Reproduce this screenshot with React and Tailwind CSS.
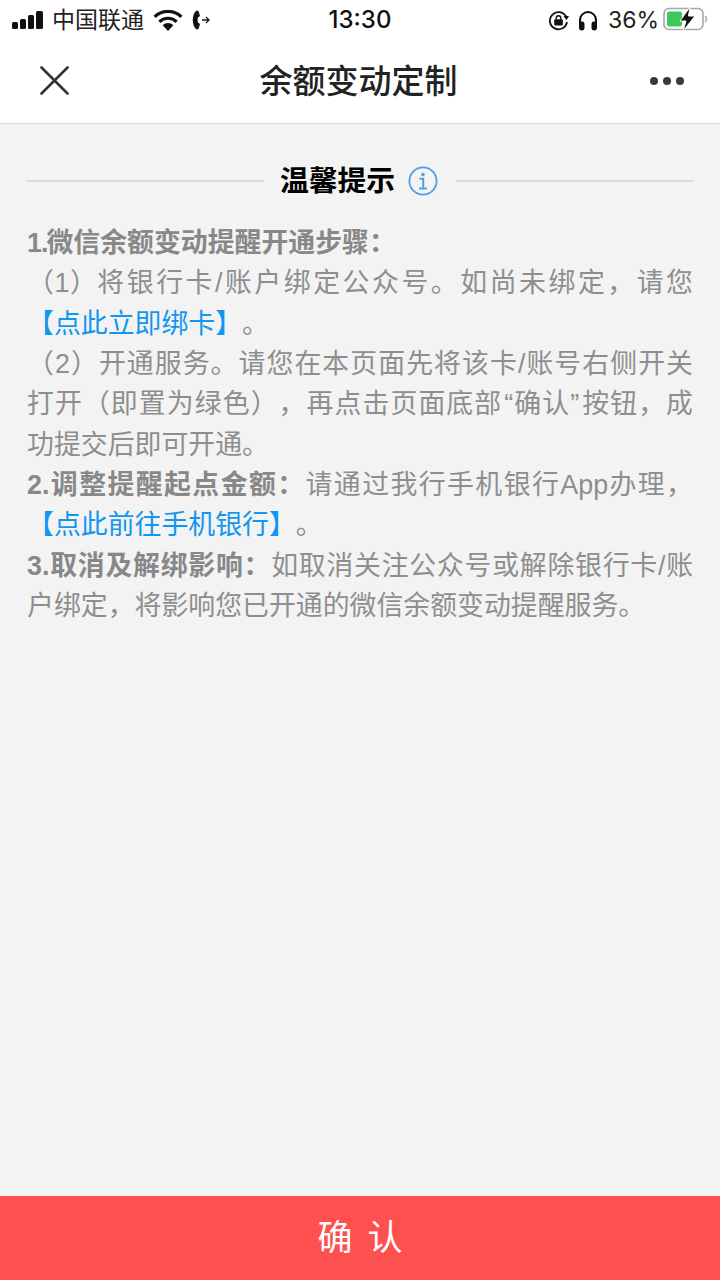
const font = { fontFamily: '"Liberation Sans", "Noto Sans CJK SC", sans-serif' }

function StatusBar() {
  return (
    <div className="flex items-center h-10 bg-white text-[#111] relative">
      {/* signal */}
      <div className="flex items-end gap-[2px] ml-[12px] h-[19px] pb-[1px]">
        <span className="w-[6px] h-[7px] rounded-[1.5px] bg-[#111]" />
        <span className="w-[6px] h-[10px] rounded-[1.5px] bg-[#111]" />
        <span className="w-[6px] h-[14px] rounded-[1.5px] bg-[#111]" />
        <span className="w-[7px] h-[18px] rounded-[1.5px] bg-[#111]" />
      </div>
      <span className="ml-[9px] text-[23px] leading-none text-[#222]">中国联通</span>
      <svg className="ml-[9px]" width="30" height="21" viewBox="0 0 30 21">
        <path d="M15 21 L9.6 15.2 A7.6 7.6 0 0 1 20.4 15.2 Z" fill="#111" />
        <path d="M6.4 11.8 A12.2 12.2 0 0 1 23.6 11.8" fill="none" stroke="#111" strokeWidth="3.2" />
        <path d="M1.6 6.9 A19 19 0 0 1 28.4 6.9" fill="none" stroke="#111" strokeWidth="3.2" />
      </svg>
      <svg className="ml-[9px]" width="18" height="20" viewBox="0 0 18 20">
        <path d="M4.5 0.5 L6.5 1 L8 6 L6 7.5 C5.5 9 5.5 11 6 12.5 L8 14 L6.5 19 L4.5 19.5 C-0.5 16 -0.5 4 4.5 0.5 Z" fill="#111" />
        <path d="M10 10 H17 M14 7 L17 10 L14 13" fill="none" stroke="#222" strokeWidth="1.4" />
      </svg>
      <span
        className="absolute left-0 right-0 text-center text-[24px] leading-none font-medium pointer-events-none"
        style={{ fontFamily: '"Inter", sans-serif' }}
      >
        13:30
      </span>
      <div className="ml-auto flex items-center mr-[12px]">
        <svg width="21" height="21" viewBox="0 0 21 21">
          <path d="M18 6.5 A8.6 8.6 0 1 0 19 12" fill="none" stroke="#111" strokeWidth="1.8" />
          <path d="M15.5 6 H21 L18.4 10.2 Z" fill="#111" />
          <rect x="6.2" y="9.2" width="8.6" height="6.3" rx="1" fill="#111" />
          <path d="M8.2 9.5 V8 A2.3 2.3 0 0 1 12.8 8 V9.5" fill="none" stroke="#111" strokeWidth="1.4" />
        </svg>
        <svg className="ml-[9px]" width="20" height="21" viewBox="0 0 20 21">
          <path d="M2 14 V10 A8 8 0 0 1 18 10 V14" fill="none" stroke="#111" strokeWidth="2" />
          <rect x="1" y="11.5" width="5.5" height="9" rx="2.4" fill="#111" />
          <rect x="13.5" y="11.5" width="5.5" height="9" rx="2.4" fill="#111" />
        </svg>
        <span className="ml-[10px] text-[23px] leading-none text-[#222]" style={{ fontFamily: '"Inter", sans-serif' }}>
          36%
        </span>
        <svg className="ml-[4px] mb-[2px]" width="45" height="24" viewBox="0 0 45 24">
          <rect x="1" y="1.5" width="39" height="21" rx="5" fill="none" stroke="#a8a8a8" strokeWidth="1.6" />
          <rect x="4" y="4.5" width="15" height="15" rx="2" fill="#3cc95c" />
          <path d="M42 9 C44 10 44 14 42 15" fill="none" stroke="#aaa" strokeWidth="1.6" />
          <path d="M27 0 L17 14 H23 L20 24 L32 9 H25.5 Z" fill="#111" stroke="#fff" strokeWidth="1" />
        </svg>
      </div>
    </div>
  )
}

function NavBar() {
  return (
    <div className="flex items-center justify-between h-[84px] bg-white border-b border-[#dcdcdc] pb-[1px] relative">
      <svg className="ml-[40px] mb-[1px]" width="29" height="29" viewBox="0 0 29 29">
        <path d="M1.5 1.5 L27.5 27.5 M27.5 1.5 L1.5 27.5" stroke="#333" strokeWidth="2.6" strokeLinecap="round" />
      </svg>
      <h1 className="absolute left-0 right-[3px] text-center text-[33px] leading-none font-medium text-[#222]">
        余额变动定制
      </h1>
      <div className="flex gap-[5px] mr-[36px]">
        <span className="w-[8px] h-[8px] rounded-full bg-[#3a3a3a]" />
        <span className="w-[8px] h-[8px] rounded-full bg-[#3a3a3a]" />
        <span className="w-[8px] h-[8px] rounded-full bg-[#3a3a3a]" />
      </div>
    </div>
  )
}

function Tips() {
  return (
    <div className="px-[27px] text-[26.88px] leading-[40.32px] text-[#8e8e8e] text-justify mt-[22px] [text-spacing-trim:space-all]">
      <p><b className="font-bold text-[#888]"><span className="tracking-[-1px]">1</span><span className="tracking-[-2px]">.</span>微信余额变动提醒开通步骤：</b></p>
      <p><span className="tracking-[-2px]">（1）</span>将银行卡/账户绑定公众号。如尚未绑定，请您<span className="text-[#1296f0] whitespace-nowrap">【点此立即绑卡】</span>。</p>
      <p>（2）开通服务。请您在本页面先将该卡/账号右侧开关打开（即置为绿色），再点击页面底部<span className="mx-[2px]">“确认”</span>按钮，成功提交后即可开通。</p>
      <p><b className="font-bold text-[#888]">2.调整提醒起点金额：</b>请通过我行手机银行App办理，<span className="text-[#1296f0] whitespace-nowrap">【点此前往手机银行】</span>。</p>
      <p><b className="font-bold text-[#888]">3.取消及解绑影响：</b>如取消关注公众号或解除银行卡/账户绑定，将影响您已开通的微信余额变动提醒服务。</p>
    </div>
  )
}

export default function App() {
  return (
    <div className="flex flex-col h-[1280px] bg-[#f3f3f3] overflow-hidden" style={font}>
      <StatusBar />
      <NavBar />
      <div className="flex-1">
        <div className="flex items-center px-[27px] mt-[37px]">
          <div className="flex-1 h-[2px] bg-[#dcdcdc]" />
          <span className="ml-[16px] text-[28.8px] leading-[40px] font-bold text-black">温馨提示</span>
          <svg className="ml-[13px] mr-[18px]" width="30" height="30" viewBox="0 0 30 30">
            <circle cx="15" cy="15" r="13.6" fill="none" stroke="#4d9fe8" strokeWidth="1.8" />
            <circle cx="15" cy="8.5" r="1.8" fill="#4d9fe8" />
            <path d="M11.5 12.8 H15.2 V22.2 M11 22.6 H19" fill="none" stroke="#4d9fe8" strokeWidth="2" />
          </svg>
          <div className="flex-1 h-[2px] bg-[#dcdcdc]" />
        </div>
        <Tips />
      </div>
      <button className="h-[84px] bg-[#ff5050] text-white text-[35px] font-normal tracking-[15px] pl-[15px] pt-[1px]">确认</button>
    </div>
  )
}
